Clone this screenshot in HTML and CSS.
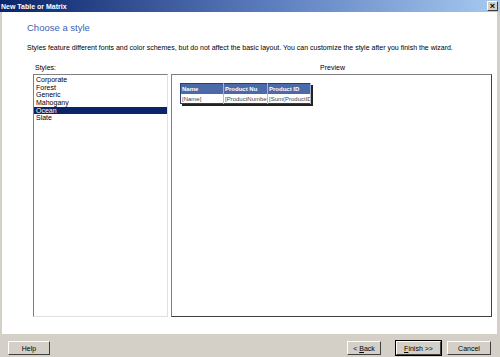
FILE: index.html
```html
<!DOCTYPE html>
<html lang="en">
<head>
    <meta charset="UTF-8">
    <title>New Table or Matrix</title>
    <link rel="stylesheet" href="styles.css">
</head>
<body>
    <div class="window">
        <div class="titlebar">
            <span class="title">New Table or Matrix</span>
            <span class="close">&#215;</span>
        </div>
        <div class="content">
            <h1>Choose a style</h1>
            <p class="intro">Styles feature different fonts and color schemes, but do not affect the basic layout. You can customize the style after you finish the wizard.</p>
            <div class="panes">
                <div class="styles-pane">
                    <div class="label">Styles:</div>
                    <ul class="style-list">
                        <li>Corporate</li>
                        <li>Forest</li>
                        <li>Generic</li>
                        <li>Mahogany</li>
                        <li class="selected">Ocean</li>
                        <li>Slate</li>
                    </ul>
                </div>
                <div class="preview-pane">
                    <div class="label center">Preview</div>
                    <div class="preview-box">
                        <table class="sample">
                            <tr>
                                <th>Name</th>
                                <th>Product Nu</th>
                                <th>Product ID</th>
                            </tr>
                            <tr>
                                <td>[Name]</td>
                                <td>[ProductNumber]</td>
                                <td>[Sum(ProductID)]</td>
                            </tr>
                        </table>
                    </div>
                </div>
            </div>
        </div>
        <div class="footer">
            <button class="btn help">Help</button>
            <div class="spacer"></div>
            <button class="btn back">&lt; <u>B</u>ack</button>
            <button class="btn default"><u>F</u>inish &gt;&gt;</button>
            <button class="btn cancel">Cancel</button>
        </div>
    </div>
</body>
</html>
```

FILE: styles.css
```css
body {
    margin: 0;
    padding: 0;
    font-family: "Liberation Sans", Arial, sans-serif;
    font-size: 7px;
    color: #000;
    background-color: #d4d0c8;
}
.window {
    width: 500px;
    height: 357px;
    display: flex;
    flex-direction: column;
    box-sizing: border-box;
    border-left: 2px solid #d4d0c8;
    border-right: 3px solid #d4d0c8;
}
.titlebar {
    height: 12px;
    flex: none;
    background: linear-gradient(to right, #0a246a, #5e7fbf 55%, #a6caf0);
    display: flex;
    align-items: center;
    justify-content: space-between;
    padding: 0 2px 0 1px;
    margin-left: -2px;
    margin-right: -3px;
}
.title {
    color: #fff;
    font-weight: bold;
    font-size: 7px;
}
.close {
    width: 9px;
    height: 8px;
    background-color: #d4d0c8;
    border: 1px solid;
    border-color: #fff #404040 #404040 #fff;
    font-size: 9px;
    line-height: 8px;
    text-align: center;
    font-weight: bold;
}
.content {
    background-color: #fff;
    flex: 1;
    padding: 0 0 17px 25px;
    display: flex;
    flex-direction: column;
}
h1 {
    margin: 10px 0 0 0;
    font-size: 9.5px;
    font-weight: normal;
    color: #3d5fb4;
}
.intro {
    margin: 11px 0 0 0;
    font-size: 7px;
}
.panes {
    display: flex;
    flex: 1;
    margin-top: 13px;
    gap: 3px;
    padding-right: 5px;
}
.styles-pane {
    width: 135px;
    margin-left: 6px;
    display: flex;
    flex-direction: column;
}
.preview-pane {
    flex: 1;
    display: flex;
    flex-direction: column;
}
.label {
    height: 10px;
    padding-left: 2px;
    font-size: 7px;
}
.label.center {
    text-align: center;
}
.style-list {
    flex: 1;
    margin: 0;
    padding: 1px 0 0 0;
    list-style: none;
    border: 1px solid;
    border-color: #7f7f7f #e0e0e0 #e0e0e0 #7f7f7f;
}
.style-list li {
    height: 7.7px;
    line-height: 7.7px;
    padding-left: 2px;
}
.style-list li.selected {
    background-color: #0a246a;
    color: #fff;
}
.preview-box {
    flex: 1;
    border: 1px solid;
    border-color: #808080 #404040 #404040 #808080;
    padding: 8px 0 0 8px;
}
.sample {
    border-collapse: collapse;
    table-layout: fixed;
    width: 128px;
    font-size: 6px;
    box-shadow: 2px 2px 0 #222;
    border: 1px solid #2c3e70;
}
.sample th {
    background-color: #4d6aa8;
    color: #fff;
    text-align: left;
    font-weight: bold;
    height: 10px;
    padding: 0 1px;
    border-right: 1px solid #9fb3d8;
    overflow: hidden;
    white-space: nowrap;
}
.sample td {
    background-color: #fff;
    color: #444;
    height: 9px;
    padding: 0 1px;
    border-right: 1px solid #bbb;
    white-space: nowrap;
    overflow: hidden;
}
.sample th:nth-child(1) {
    width: 40px;
}
.sample th:nth-child(2) {
    width: 41px;
}
.sample th:nth-child(3) {
    width: 40px;
}
.footer {
    height: 23px;
    flex: none;
    display: flex;
    align-items: flex-start;
    padding: 7px 6px 0 6px;
    box-sizing: border-box;
    gap: 3px;
}
.spacer {
    flex: 1;
}
.btn {
    font-family: "Liberation Sans", Arial, sans-serif;
    font-size: 7px;
    height: 14px;
    padding: 0;
    background-color: #d4d0c8;
    border: 1px solid;
    border-color: #fff #404040 #404040 #fff;
    color: #000;
}
.help {
    width: 42px;
}
.back {
    width: 34px;
}
.btn.default {
    outline: 1px solid #000;
    width: 45px;
    margin-left: 12px;
}
.cancel {
    margin-left: 3px;
    width: 44px;
}
```
